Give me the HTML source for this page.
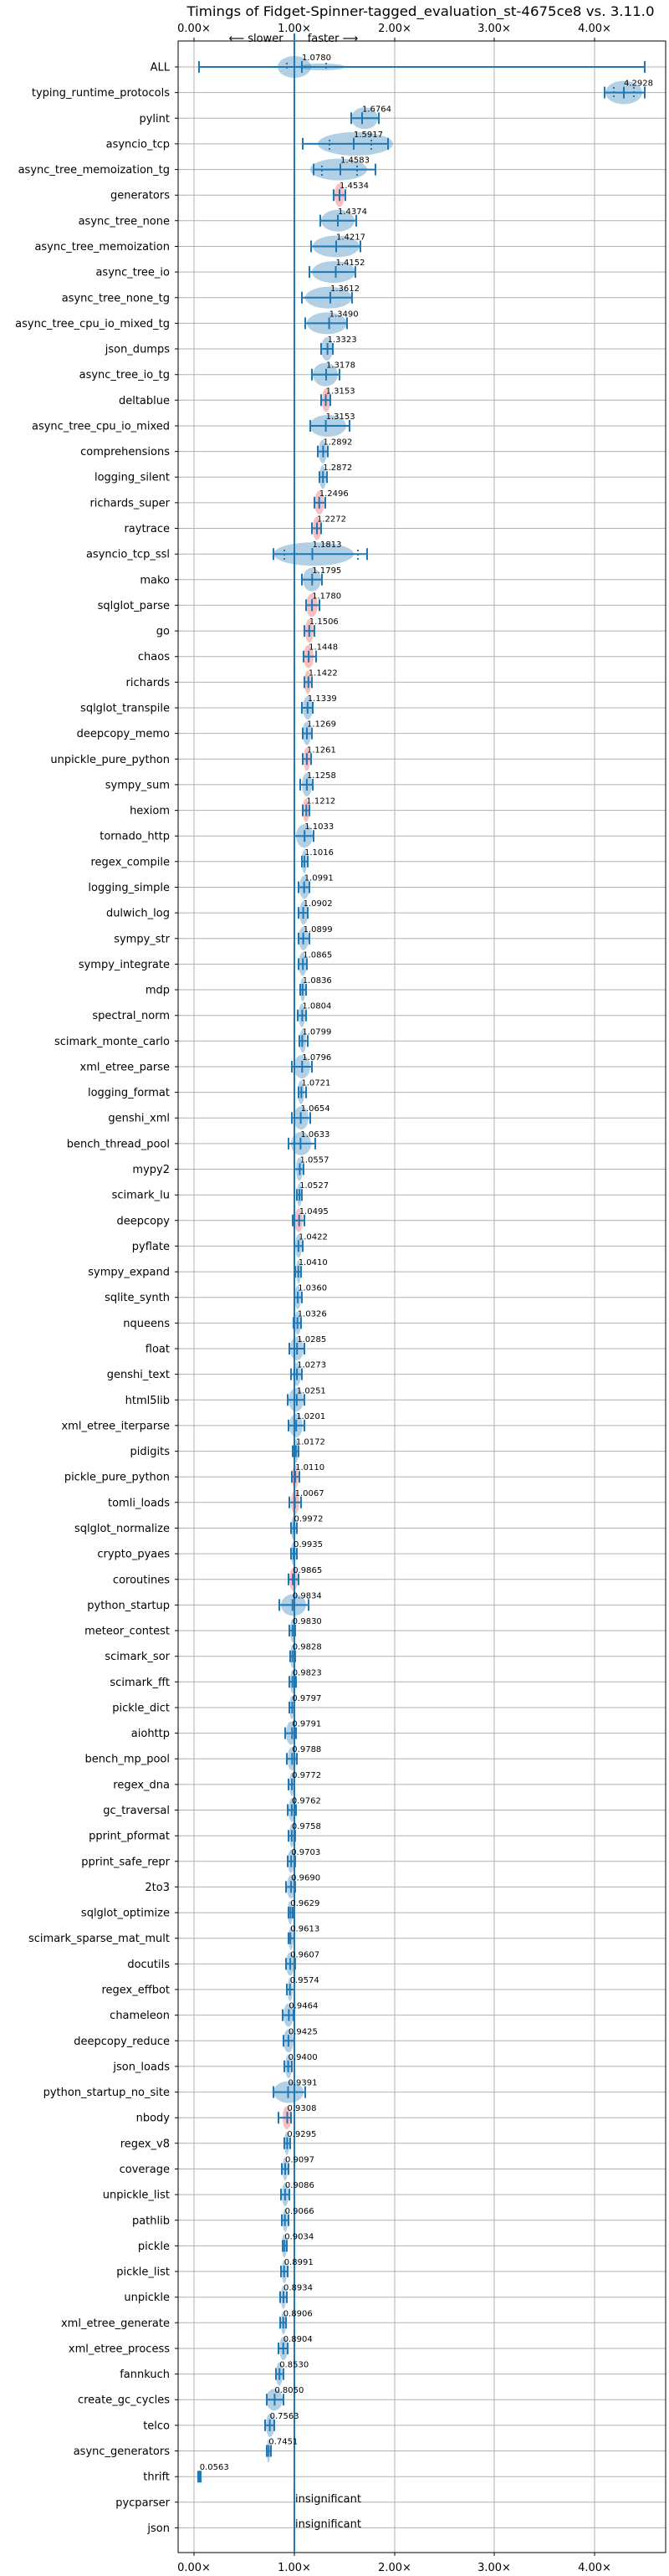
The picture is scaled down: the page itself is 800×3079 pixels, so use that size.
<!DOCTYPE html>
<html><head><meta charset="utf-8"><style>
html,body{margin:0;padding:0;background:#fff;}
svg{display:block;font-family:"DejaVu Sans","Liberation Sans",sans-serif;}
.v{fill:#1f77b4;fill-opacity:.35}
.r{fill:#f08080;fill-opacity:.5}
.lab text{font-size:13px;text-anchor:end;fill:#000}
.val text{font-size:10px;fill:#000}
</style></head><body>
<svg width="800" height="3079" viewBox="0 0 800 3079" xmlns="http://www.w3.org/2000/svg">
<rect width="800" height="3079" fill="#fff"/>
<text x="503" y="19" font-size="16" text-anchor="middle" textLength="559" lengthAdjust="spacingAndGlyphs">Timings of Fidget-Spinner-tagged_evaluation_st-4675ce8 vs. 3.11.0</text>
<g font-size="13" text-anchor="middle">
<text x="232" y="38">0.00×</text><text x="352" y="38">1.00×</text><text x="472" y="38">2.00×</text><text x="591" y="38">3.00×</text><text x="711" y="38">4.00×</text>
<text x="232" y="3073">0.00×</text><text x="352" y="3073">1.00×</text><text x="472" y="3073">2.00×</text><text x="591" y="3073">3.00×</text><text x="711" y="3073">4.00×</text>
<text x="306" y="50">⟵ slower</text><text x="398" y="50">faster ⟶</text>
</g>
<g stroke="#000" stroke-width="1">
<path d="M232 45V49M352 45V49M472 45V49M591 45V49M711 45V49M232 3051V3055M352 3051V3055M472 3051V3055M591 3051V3055M711 3051V3055"/>
</g>
<g stroke="#b0b0b0" stroke-width="1">
<path d="M232 49V3051M352 49V3051M472 49V3051M591 49V3051M711 49V3051"/>
<path id="hg" d="M213 80H796M213 110.6H796M213 141.3H796M213 171.9H796M213 202.6H796M213 233.2H796M213 263.8H796M213 294.5H796M213 325.1H796M213 355.8H796M213 386.4H796M213 417H796M213 447.7H796M213 478.3H796M213 509H796M213 539.6H796M213 570.2H796M213 600.9H796M213 631.5H796M213 662.2H796M213 692.8H796M213 723.4H796M213 754.1H796M213 784.7H796M213 815.4H796M213 846H796M213 876.6H796M213 907.3H796M213 937.9H796M213 968.6H796M213 999.2H796M213 1029.8H796M213 1060.5H796M213 1091.1H796M213 1121.8H796M213 1152.4H796M213 1183H796M213 1213.7H796M213 1244.3H796M213 1275H796M213 1305.6H796M213 1336.2H796M213 1366.9H796M213 1397.5H796M213 1428.2H796M213 1458.8H796M213 1489.4H796M213 1520.1H796M213 1550.7H796M213 1581.4H796M213 1612H796M213 1642.6H796M213 1673.3H796M213 1703.9H796M213 1734.6H796M213 1765.2H796M213 1795.8H796M213 1826.5H796M213 1857.1H796M213 1887.8H796M213 1918.4H796M213 1949H796M213 1979.7H796M213 2010.3H796M213 2041H796M213 2071.6H796M213 2102.2H796M213 2132.9H796M213 2163.5H796M213 2194.2H796M213 2224.8H796M213 2255.4H796M213 2286.1H796M213 2316.7H796M213 2347.4H796M213 2378H796M213 2408.6H796M213 2439.3H796M213 2469.9H796M213 2500.6H796M213 2531.2H796M213 2561.8H796M213 2592.5H796M213 2623.1H796M213 2653.8H796M213 2684.4H796M213 2715H796M213 2745.7H796M213 2776.3H796M213 2807H796M213 2837.6H796M213 2868.2H796M213 2898.9H796M213 2929.5H796M213 2960.2H796M213 2990.8H796M213 3021.4H796"/>
</g>
<g transform="translate(-4,0)" stroke="#000"><use href="#hg" style="stroke-dasharray:4 2000"/></g>
<rect x="213" y="49" width="583" height="3002" fill="none" stroke="#000" stroke-width="1"/>
<g>
<ellipse class="v" cx="352" cy="80" rx="20" ry="13"/><ellipse class="v" cx="385" cy="80" rx="28" ry="4"/>
<ellipse class="v" cx="746" cy="110.6" rx="22" ry="14"/>
<ellipse class="v" cx="436" cy="141.3" rx="16" ry="13"/>
<ellipse class="v" cx="425" cy="171.9" rx="45" ry="14"/>
<ellipse class="v" cx="405" cy="202.6" rx="34" ry="13"/>
<ellipse class="r" cx="406" cy="233.2" rx="6" ry="14"/>
<ellipse class="v" cx="404" cy="263.8" rx="20" ry="13"/>
<ellipse class="v" cx="402" cy="294.5" rx="28" ry="13"/>
<ellipse class="v" cx="399" cy="325.1" rx="26" ry="13"/>
<ellipse class="v" cx="393" cy="355.8" rx="28" ry="13"/>
<ellipse class="v" cx="391" cy="386.4" rx="24" ry="13"/>
<ellipse class="v" cx="391" cy="417" rx="7" ry="14"/>
<ellipse class="v" cx="389" cy="447.7" rx="15" ry="14"/>
<ellipse class="r" cx="390" cy="478.3" rx="5" ry="14"/>
<ellipse class="v" cx="392" cy="509" rx="22" ry="13"/>
<ellipse class="v" cx="386" cy="539.6" rx="5" ry="14"/>
<ellipse class="v" cx="386" cy="570.2" rx="4" ry="14"/>
<ellipse class="r" cx="382" cy="600.9" rx="6" ry="14"/>
<ellipse class="r" cx="379" cy="631.5" rx="5" ry="14"/>
<ellipse class="v" cx="375" cy="662.2" rx="48" ry="14"/>
<ellipse class="v" cx="373" cy="692.8" rx="11" ry="14"/>
<ellipse class="r" cx="373" cy="723.4" rx="7" ry="14"/>
<ellipse class="r" cx="370" cy="754.1" rx="5" ry="14"/>
<ellipse class="r" cx="369" cy="784.7" rx="6" ry="14"/>
<ellipse class="r" cx="368" cy="815.4" rx="4" ry="14"/>
<ellipse class="v" cx="368" cy="846" rx="6" ry="14"/>
<ellipse class="v" cx="367" cy="876.6" rx="5" ry="14"/>
<ellipse class="r" cx="367" cy="907.3" rx="4" ry="14"/>
<ellipse class="v" cx="367" cy="937.9" rx="6" ry="14"/>
<ellipse class="r" cx="366" cy="968.6" rx="4" ry="14"/>
<ellipse class="v" cx="364" cy="999.2" rx="10" ry="14"/>
<ellipse class="v" cx="364" cy="1029.8" rx="3" ry="14"/>
<ellipse class="v" cx="364" cy="1060.5" rx="6" ry="14"/>
<ellipse class="v" cx="363" cy="1091.1" rx="5" ry="14"/>
<ellipse class="v" cx="363" cy="1121.8" rx="6" ry="14"/>
<ellipse class="v" cx="362" cy="1152.4" rx="5" ry="14"/>
<ellipse class="v" cx="362" cy="1183" rx="3" ry="14"/>
<ellipse class="v" cx="361" cy="1213.7" rx="4" ry="14"/>
<ellipse class="v" cx="362" cy="1244.3" rx="4" ry="14"/>
<ellipse class="v" cx="361" cy="1275" rx="10" ry="14"/>
<ellipse class="v" cx="360" cy="1305.6" rx="4" ry="14"/>
<ellipse class="v" cx="360" cy="1336.2" rx="9" ry="14"/>
<ellipse class="v" cx="360" cy="1366.9" rx="12" ry="14"/>
<ellipse class="v" cx="358" cy="1397.5" rx="4" ry="14"/>
<ellipse class="v" cx="358" cy="1428.2" rx="3" ry="14"/>
<ellipse class="r" cx="357" cy="1458.8" rx="5" ry="14"/>
<ellipse class="v" cx="357" cy="1489.4" rx="4" ry="14"/>
<ellipse class="v" cx="357" cy="1520.1" rx="3" ry="14"/>
<ellipse class="v" cx="356" cy="1550.7" rx="4" ry="14"/>
<ellipse class="v" cx="356" cy="1581.4" rx="4" ry="14"/>
<ellipse class="v" cx="355" cy="1612" rx="8" ry="14"/>
<ellipse class="v" cx="355" cy="1642.6" rx="5" ry="14"/>
<ellipse class="v" cx="354" cy="1673.3" rx="9" ry="14"/>
<ellipse class="v" cx="354" cy="1703.9" rx="8" ry="14"/>
<ellipse class="v" cx="354" cy="1734.6" rx="3" ry="14"/>
<ellipse class="r" cx="353" cy="1765.2" rx="4" ry="14"/>
<ellipse class="r" cx="353" cy="1795.8" rx="5" ry="14"/>
<ellipse class="v" cx="351" cy="1826.5" rx="3" ry="14"/>
<ellipse class="v" cx="351" cy="1857.1" rx="3" ry="14"/>
<ellipse class="r" cx="351" cy="1887.8" rx="5" ry="14"/>
<ellipse class="v" cx="351" cy="1918.4" rx="15" ry="13"/>
<ellipse class="v" cx="350" cy="1949" rx="3" ry="14"/>
<ellipse class="v" cx="350" cy="1979.7" rx="3" ry="14"/>
<ellipse class="v" cx="350" cy="2010.3" rx="3" ry="14"/>
<ellipse class="v" cx="349" cy="2041" rx="3" ry="14"/>
<ellipse class="v" cx="348" cy="2071.6" rx="6" ry="14"/>
<ellipse class="v" cx="349" cy="2102.2" rx="5" ry="14"/>
<ellipse class="v" cx="349" cy="2132.9" rx="3" ry="14"/>
<ellipse class="v" cx="349" cy="2163.5" rx="4" ry="14"/>
<ellipse class="v" cx="349" cy="2194.2" rx="3" ry="14"/>
<ellipse class="v" cx="348" cy="2224.8" rx="4" ry="14"/>
<ellipse class="v" cx="348" cy="2255.4" rx="5" ry="14"/>
<ellipse class="v" cx="347" cy="2286.1" rx="3" ry="14"/>
<ellipse class="v" cx="348" cy="2316.7" rx="3" ry="14"/>
<ellipse class="v" cx="347" cy="2347.4" rx="5" ry="14"/>
<ellipse class="v" cx="347" cy="2378" rx="3" ry="14"/>
<ellipse class="v" cx="345" cy="2408.6" rx="6" ry="14"/>
<ellipse class="v" cx="345" cy="2439.3" rx="6" ry="14"/>
<ellipse class="v" cx="345" cy="2469.9" rx="4" ry="14"/>
<ellipse class="v" cx="345" cy="2500.6" rx="18" ry="13"/>
<ellipse class="r" cx="343" cy="2531.2" rx="5" ry="14"/>
<ellipse class="v" cx="343" cy="2561.8" rx="3" ry="14"/>
<ellipse class="v" cx="341" cy="2592.5" rx="3" ry="14"/>
<ellipse class="v" cx="341" cy="2623.1" rx="4" ry="14"/>
<ellipse class="v" cx="341" cy="2653.8" rx="3" ry="14"/>
<ellipse class="v" cx="340" cy="2684.4" rx="3" ry="14"/>
<ellipse class="v" cx="340" cy="2715" rx="3" ry="14"/>
<ellipse class="v" cx="339" cy="2745.7" rx="3" ry="14"/>
<ellipse class="v" cx="339" cy="2776.3" rx="3" ry="14"/>
<ellipse class="v" cx="339" cy="2807" rx="5" ry="14"/>
<ellipse class="v" cx="334" cy="2837.6" rx="4" ry="14"/>
<ellipse class="v" cx="328" cy="2868.2" rx="10" ry="13"/>
<ellipse class="v" cx="323" cy="2898.9" rx="5" ry="14"/>
<ellipse class="v" cx="321" cy="2929.5" rx="2" ry="14"/>
</g>
<path d="M352 40V3051" stroke="#1f77b4" stroke-width="2"/>
<g stroke="#1f77b4" stroke-width="2" fill="none">
<path d="M238 80H771M238 73v14M771 73v14M361 73v14"/>
<path d="M723 110.6H771M723 103.6v14M771 103.6v14M746 103.6v14"/>
<path d="M420 141.3H453M420 134.3v14M453 134.3v14M433 134.3v14"/>
<path d="M362 171.9H464M362 164.9v14M464 164.9v14M423 164.9v14"/>
<path d="M375 202.6H449M375 195.6v14M449 195.6v14M407 195.6v14"/>
<path d="M399 233.2H413M399 226.2v14M413 226.2v14M406 226.2v14"/>
<path d="M383 263.8H426M383 256.8v14M426 256.8v14M404 256.8v14"/>
<path d="M372 294.5H431M372 287.5v14M431 287.5v14M402 287.5v14"/>
<path d="M370 325.1H425M370 318.1v14M425 318.1v14M401.5 318.1v14"/>
<path d="M361 355.8H421M361 348.8v14M421 348.8v14M395 348.8v14"/>
<path d="M365 386.4H415M365 379.4v14M415 379.4v14M393.6 379.4v14"/>
<path d="M384 417H398M384 410v14M398 410v14M391.6 410v14"/>
<path d="M373 447.7H406M373 440.7v14M406 440.7v14M390 440.7v14"/>
<path d="M384 478.3H395M384 471.3v14M395 471.3v14M389.6 471.3v14"/>
<path d="M371 509H418M371 502v14M418 502v14M389.6 502v14"/>
<path d="M380 539.6H392M380 532.6v14M392 532.6v14M386.4 532.6v14"/>
<path d="M382 570.2H391M382 563.2v14M391 563.2v14M386.2 563.2v14"/>
<path d="M376 600.9H389M376 593.9v14M389 593.9v14M381.7 593.9v14"/>
<path d="M373 631.5H384M373 624.5v14M384 624.5v14M379 624.5v14"/>
<path d="M327 662.2H439M327 655.2v14M439 655.2v14M373.5 655.2v14"/>
<path d="M361 692.8H385M361 685.8v14M385 685.8v14M373.3 685.8v14"/>
<path d="M366 723.4H382M366 716.4v14M382 716.4v14M373.1 716.4v14"/>
<path d="M364 754.1H376M364 747.1v14M376 747.1v14M369.8 747.1v14"/>
<path d="M363 784.7H378M363 777.7v14M378 777.7v14M369.1 777.7v14"/>
<path d="M364 815.4H373M364 808.4v14M373 808.4v14M368.8 808.4v14"/>
<path d="M361 846H374M361 839v14M374 839v14M367.8 839v14"/>
<path d="M362 876.6H373M362 869.6v14M373 869.6v14M367 869.6v14"/>
<path d="M362 907.3H372M362 900.3v14M372 900.3v14M366.9 900.3v14"/>
<path d="M359 937.9H374M359 930.9v14M374 930.9v14M366.9 930.9v14"/>
<path d="M362 968.6H370M362 961.6v14M370 961.6v14M366.3 961.6v14"/>
<path d="M352 999.2H375M352 992.2v14M375 992.2v14M364.2 992.2v14"/>
<path d="M361 1029.8H368M361 1022.8v14M368 1022.8v14M364 1022.8v14"/>
<path d="M357 1060.5H370M357 1053.5v14M370 1053.5v14M363.7 1053.5v14"/>
<path d="M357 1091.1H368M357 1084.1v14M368 1084.1v14M362.6 1084.1v14"/>
<path d="M357 1121.8H370M357 1114.8v14M370 1114.8v14M362.6 1114.8v14"/>
<path d="M357 1152.4H367M357 1145.4v14M367 1145.4v14M362.2 1145.4v14"/>
<path d="M359 1183H366M359 1176v14M366 1176v14M361.8 1176v14"/>
<path d="M356 1213.7H366M356 1206.7v14M366 1206.7v14M361.4 1206.7v14"/>
<path d="M358 1244.3H368M358 1237.3v14M368 1237.3v14M361.4 1237.3v14"/>
<path d="M349 1275H373M349 1268v14M373 1268v14M361.3 1268v14"/>
<path d="M357 1305.6H366M357 1298.6v14M366 1298.6v14M360.4 1298.6v14"/>
<path d="M349 1336.2H371M349 1329.2v14M371 1329.2v14M359.6 1329.2v14"/>
<path d="M345 1366.9H377M345 1359.9v14M377 1359.9v14M359.4 1359.9v14"/>
<path d="M352 1397.5H363M352 1390.5v14M363 1390.5v14M358.5 1390.5v14"/>
<path d="M355 1428.2H361M355 1421.2v14M361 1421.2v14M358.1 1421.2v14"/>
<path d="M350 1458.8H364M350 1451.8v14M364 1451.8v14M357.7 1451.8v14"/>
<path d="M352 1489.4H362M352 1482.4v14M362 1482.4v14M356.9 1482.4v14"/>
<path d="M353 1520.1H360M353 1513.1v14M360 1513.1v14M356.7 1513.1v14"/>
<path d="M352 1550.7H361M352 1543.7v14M361 1543.7v14M356.1 1543.7v14"/>
<path d="M351 1581.4H360M351 1574.4v14M360 1574.4v14M355.7 1574.4v14"/>
<path d="M346 1612H364M346 1605v14M364 1605v14M355.2 1605v14"/>
<path d="M348 1642.6H361M348 1635.6v14M361 1635.6v14M355.1 1635.6v14"/>
<path d="M344 1673.3H364M344 1666.3v14M364 1666.3v14M354.8 1666.3v14"/>
<path d="M345 1703.9H364M345 1696.9v14M364 1696.9v14M354.2 1696.9v14"/>
<path d="M350 1734.6H357M350 1727.6v14M357 1727.6v14M353.9 1727.6v14"/>
<path d="M349 1765.2H358M349 1758.2v14M358 1758.2v14M353.1 1758.2v14"/>
<path d="M346 1795.8H360M346 1788.8v14M360 1788.8v14M352.6 1788.8v14"/>
<path d="M348 1826.5H355M348 1819.5v14M355 1819.5v14M351.5 1819.5v14"/>
<path d="M348 1857.1H355M348 1850.1v14M355 1850.1v14M351 1850.1v14"/>
<path d="M345 1887.8H357M345 1880.8v14M357 1880.8v14M350.2 1880.8v14"/>
<path d="M334 1918.4H369M334 1911.4v14M369 1911.4v14M349.8 1911.4v14"/>
<path d="M346 1949H353M346 1942v14M353 1942v14M349.8 1942v14"/>
<path d="M347 1979.7H353M347 1972.7v14M353 1972.7v14M349.7 1972.7v14"/>
<path d="M346 2010.3H354M346 2003.3v14M354 2003.3v14M349.7 2003.3v14"/>
<path d="M346 2041H352M346 2034v14M352 2034v14M349.4 2034v14"/>
<path d="M341 2071.6H354M341 2064.6v14M354 2064.6v14M349.3 2064.6v14"/>
<path d="M343 2102.2H355M343 2095.2v14M355 2095.2v14M349.3 2095.2v14"/>
<path d="M345 2132.9H352M345 2125.9v14M352 2125.9v14M349.1 2125.9v14"/>
<path d="M344 2163.5H354M344 2156.5v14M354 2156.5v14M348.9 2156.5v14"/>
<path d="M345 2194.2H353M345 2187.2v14M353 2187.2v14M348.9 2187.2v14"/>
<path d="M344 2224.8H353M344 2217.8v14M353 2217.8v14M348.2 2217.8v14"/>
<path d="M342 2255.4H353M342 2248.4v14M353 2248.4v14M348.1 2248.4v14"/>
<path d="M345 2286.1H350M345 2279.1v14M350 2279.1v14M347.4 2279.1v14"/>
<path d="M345 2316.7H352M345 2309.7v14M352 2309.7v14M347.2 2309.7v14"/>
<path d="M342 2347.4H353M342 2340.4v14M353 2340.4v14M347.1 2340.4v14"/>
<path d="M343 2378H352M343 2371v14M352 2371v14M346.7 2371v14"/>
<path d="M338 2408.6H351M338 2401.6v14M351 2401.6v14M345.4 2401.6v14"/>
<path d="M339 2439.3H352M339 2432.3v14M352 2432.3v14M344.9 2432.3v14"/>
<path d="M340 2469.9H349M340 2462.9v14M349 2462.9v14M344.6 2462.9v14"/>
<path d="M327 2500.6H365M327 2493.6v14M365 2493.6v14M344.5 2493.6v14"/>
<path d="M333 2531.2H348M333 2524.2v14M348 2524.2v14M343.5 2524.2v14"/>
<path d="M340 2561.8H347M340 2554.8v14M347 2554.8v14M343.4 2554.8v14"/>
<path d="M337 2592.5H345M337 2585.5v14M345 2585.5v14M341 2585.5v14"/>
<path d="M336 2623.1H346M336 2616.1v14M346 2616.1v14M340.9 2616.1v14"/>
<path d="M337 2653.8H345M337 2646.8v14M345 2646.8v14M340.6 2646.8v14"/>
<path d="M338 2684.4H343M338 2677.4v14M343 2677.4v14M340.2 2677.4v14"/>
<path d="M336 2715H344M336 2708v14M344 2708v14M339.7 2708v14"/>
<path d="M335 2745.7H343M335 2738.7v14M343 2738.7v14M339 2738.7v14"/>
<path d="M335 2776.3H342M335 2769.3v14M342 2769.3v14M338.7 2769.3v14"/>
<path d="M333 2807H344M333 2800v14M344 2800v14M338.7 2800v14"/>
<path d="M330 2837.6H339M330 2830.6v14M339 2830.6v14M334.2 2830.6v14"/>
<path d="M319 2868.2H339M319 2861.2v14M339 2861.2v14M328.4 2861.2v14"/>
<path d="M317 2898.9H328M317 2891.9v14M328 2891.9v14M322.6 2891.9v14"/>
<path d="M319 2929.5H324M319 2922.5v14M324 2922.5v14M321.3 2922.5v14"/>
<path d="M237 2960.2H240M237 2953.2v14M240 2953.2v14M238.7 2953.2v14"/>
</g>
<g stroke="#1f77b4" stroke-width="2" stroke-dasharray="2 3">
<path d="M343 75v10M390 75v10M734 104v14M758 104v14M340 657v14M428 657v14M394 167v14M444 167v14M385 198v14M427 198v14"/>
</g>
<g class="lab">
<text x="203" y="84.5">ALL</text>
<text x="203" y="115.1">typing_runtime_protocols</text>
<text x="203" y="145.8">pylint</text>
<text x="203" y="176.4">asyncio_tcp</text>
<text x="203" y="207.1">async_tree_memoization_tg</text>
<text x="203" y="237.7">generators</text>
<text x="203" y="268.3">async_tree_none</text>
<text x="203" y="299">async_tree_memoization</text>
<text x="203" y="329.6">async_tree_io</text>
<text x="203" y="360.3">async_tree_none_tg</text>
<text x="203" y="390.9">async_tree_cpu_io_mixed_tg</text>
<text x="203" y="421.5">json_dumps</text>
<text x="203" y="452.2">async_tree_io_tg</text>
<text x="203" y="482.8">deltablue</text>
<text x="203" y="513.5">async_tree_cpu_io_mixed</text>
<text x="203" y="544.1">comprehensions</text>
<text x="203" y="574.7">logging_silent</text>
<text x="203" y="605.4">richards_super</text>
<text x="203" y="636">raytrace</text>
<text x="203" y="666.7">asyncio_tcp_ssl</text>
<text x="203" y="697.3">mako</text>
<text x="203" y="727.9">sqlglot_parse</text>
<text x="203" y="758.6">go</text>
<text x="203" y="789.2">chaos</text>
<text x="203" y="819.9">richards</text>
<text x="203" y="850.5">sqlglot_transpile</text>
<text x="203" y="881.1">deepcopy_memo</text>
<text x="203" y="911.8">unpickle_pure_python</text>
<text x="203" y="942.4">sympy_sum</text>
<text x="203" y="973.1">hexiom</text>
<text x="203" y="1003.7">tornado_http</text>
<text x="203" y="1034.3">regex_compile</text>
<text x="203" y="1065">logging_simple</text>
<text x="203" y="1095.6">dulwich_log</text>
<text x="203" y="1126.3">sympy_str</text>
<text x="203" y="1156.9">sympy_integrate</text>
<text x="203" y="1187.5">mdp</text>
<text x="203" y="1218.2">spectral_norm</text>
<text x="203" y="1248.8">scimark_monte_carlo</text>
<text x="203" y="1279.5">xml_etree_parse</text>
<text x="203" y="1310.1">logging_format</text>
<text x="203" y="1340.7">genshi_xml</text>
<text x="203" y="1371.4">bench_thread_pool</text>
<text x="203" y="1402">mypy2</text>
<text x="203" y="1432.7">scimark_lu</text>
<text x="203" y="1463.3">deepcopy</text>
<text x="203" y="1493.9">pyflate</text>
<text x="203" y="1524.6">sympy_expand</text>
<text x="203" y="1555.2">sqlite_synth</text>
<text x="203" y="1585.9">nqueens</text>
<text x="203" y="1616.5">float</text>
<text x="203" y="1647.1">genshi_text</text>
<text x="203" y="1677.8">html5lib</text>
<text x="203" y="1708.4">xml_etree_iterparse</text>
<text x="203" y="1739.1">pidigits</text>
<text x="203" y="1769.7">pickle_pure_python</text>
<text x="203" y="1800.3">tomli_loads</text>
<text x="203" y="1831">sqlglot_normalize</text>
<text x="203" y="1861.6">crypto_pyaes</text>
<text x="203" y="1892.3">coroutines</text>
<text x="203" y="1922.9">python_startup</text>
<text x="203" y="1953.5">meteor_contest</text>
<text x="203" y="1984.2">scimark_sor</text>
<text x="203" y="2014.8">scimark_fft</text>
<text x="203" y="2045.5">pickle_dict</text>
<text x="203" y="2076.1">aiohttp</text>
<text x="203" y="2106.7">bench_mp_pool</text>
<text x="203" y="2137.4">regex_dna</text>
<text x="203" y="2168">gc_traversal</text>
<text x="203" y="2198.7">pprint_pformat</text>
<text x="203" y="2229.3">pprint_safe_repr</text>
<text x="203" y="2259.9">2to3</text>
<text x="203" y="2290.6">sqlglot_optimize</text>
<text x="203" y="2321.2">scimark_sparse_mat_mult</text>
<text x="203" y="2351.9">docutils</text>
<text x="203" y="2382.5">regex_effbot</text>
<text x="203" y="2413.1">chameleon</text>
<text x="203" y="2443.8">deepcopy_reduce</text>
<text x="203" y="2474.4">json_loads</text>
<text x="203" y="2505.1">python_startup_no_site</text>
<text x="203" y="2535.7">nbody</text>
<text x="203" y="2566.3">regex_v8</text>
<text x="203" y="2597">coverage</text>
<text x="203" y="2627.6">unpickle_list</text>
<text x="203" y="2658.3">pathlib</text>
<text x="203" y="2688.9">pickle</text>
<text x="203" y="2719.5">pickle_list</text>
<text x="203" y="2750.2">unpickle</text>
<text x="203" y="2780.8">xml_etree_generate</text>
<text x="203" y="2811.5">xml_etree_process</text>
<text x="203" y="2842.1">fannkuch</text>
<text x="203" y="2872.7">create_gc_cycles</text>
<text x="203" y="2903.4">telco</text>
<text x="203" y="2934">async_generators</text>
<text x="203" y="2964.7">thrift</text>
<text x="203" y="2995.3">pycparser</text>
<text x="203" y="3025.9">json</text>
</g>
<g class="val">
<text x="361" y="72">1.0780</text>
<text x="746" y="102.6">4.2928</text>
<text x="433" y="133.3">1.6764</text>
<text x="423" y="163.9">1.5917</text>
<text x="407" y="194.6">1.4583</text>
<text x="406" y="225.2">1.4534</text>
<text x="404" y="255.8">1.4374</text>
<text x="402" y="286.5">1.4217</text>
<text x="401.5" y="317.1">1.4152</text>
<text x="395" y="347.8">1.3612</text>
<text x="393.6" y="378.4">1.3490</text>
<text x="391.6" y="409">1.3323</text>
<text x="390" y="439.7">1.3178</text>
<text x="389.6" y="470.3">1.3153</text>
<text x="389.6" y="501">1.3153</text>
<text x="386.4" y="531.6">1.2892</text>
<text x="386.2" y="562.2">1.2872</text>
<text x="381.7" y="592.9">1.2496</text>
<text x="379" y="623.5">1.2272</text>
<text x="373.5" y="654.2">1.1813</text>
<text x="373.3" y="684.8">1.1795</text>
<text x="373.1" y="715.4">1.1780</text>
<text x="369.8" y="746.1">1.1506</text>
<text x="369.1" y="776.7">1.1448</text>
<text x="368.8" y="807.4">1.1422</text>
<text x="367.8" y="838">1.1339</text>
<text x="367" y="868.6">1.1269</text>
<text x="366.9" y="899.3">1.1261</text>
<text x="366.9" y="929.9">1.1258</text>
<text x="366.3" y="960.6">1.1212</text>
<text x="364.2" y="991.2">1.1033</text>
<text x="364" y="1021.8">1.1016</text>
<text x="363.7" y="1052.5">1.0991</text>
<text x="362.6" y="1083.1">1.0902</text>
<text x="362.6" y="1113.8">1.0899</text>
<text x="362.2" y="1144.4">1.0865</text>
<text x="361.8" y="1175">1.0836</text>
<text x="361.4" y="1205.7">1.0804</text>
<text x="361.4" y="1236.3">1.0799</text>
<text x="361.3" y="1267">1.0796</text>
<text x="360.4" y="1297.6">1.0721</text>
<text x="359.6" y="1328.2">1.0654</text>
<text x="359.4" y="1358.9">1.0633</text>
<text x="358.5" y="1389.5">1.0557</text>
<text x="358.1" y="1420.2">1.0527</text>
<text x="357.7" y="1450.8">1.0495</text>
<text x="356.9" y="1481.4">1.0422</text>
<text x="356.7" y="1512.1">1.0410</text>
<text x="356.1" y="1542.7">1.0360</text>
<text x="355.7" y="1573.4">1.0326</text>
<text x="355.2" y="1604">1.0285</text>
<text x="355.1" y="1634.6">1.0273</text>
<text x="354.8" y="1665.3">1.0251</text>
<text x="354.2" y="1695.9">1.0201</text>
<text x="353.9" y="1726.6">1.0172</text>
<text x="353.1" y="1757.2">1.0110</text>
<text x="352.6" y="1787.8">1.0067</text>
<text x="351.5" y="1818.5">0.9972</text>
<text x="351" y="1849.1">0.9935</text>
<text x="350.2" y="1879.8">0.9865</text>
<text x="349.8" y="1910.4">0.9834</text>
<text x="349.8" y="1941">0.9830</text>
<text x="349.7" y="1971.7">0.9828</text>
<text x="349.7" y="2002.3">0.9823</text>
<text x="349.4" y="2033">0.9797</text>
<text x="349.3" y="2063.6">0.9791</text>
<text x="349.3" y="2094.2">0.9788</text>
<text x="349.1" y="2124.9">0.9772</text>
<text x="348.9" y="2155.5">0.9762</text>
<text x="348.9" y="2186.2">0.9758</text>
<text x="348.2" y="2216.8">0.9703</text>
<text x="348.1" y="2247.4">0.9690</text>
<text x="347.4" y="2278.1">0.9629</text>
<text x="347.2" y="2308.7">0.9613</text>
<text x="347.1" y="2339.4">0.9607</text>
<text x="346.7" y="2370">0.9574</text>
<text x="345.4" y="2400.6">0.9464</text>
<text x="344.9" y="2431.3">0.9425</text>
<text x="344.6" y="2461.9">0.9400</text>
<text x="344.5" y="2492.6">0.9391</text>
<text x="343.5" y="2523.2">0.9308</text>
<text x="343.4" y="2553.8">0.9295</text>
<text x="341" y="2584.5">0.9097</text>
<text x="340.9" y="2615.1">0.9086</text>
<text x="340.6" y="2645.8">0.9066</text>
<text x="340.2" y="2676.4">0.9034</text>
<text x="339.7" y="2707">0.8991</text>
<text x="339" y="2737.7">0.8934</text>
<text x="338.7" y="2768.3">0.8906</text>
<text x="338.7" y="2799">0.8904</text>
<text x="334.2" y="2829.6">0.8530</text>
<text x="328.4" y="2860.2">0.8050</text>
<text x="322.6" y="2890.9">0.7563</text>
<text x="321.3" y="2921.5">0.7451</text>
<text x="238.7" y="2952.2">0.0563</text>
</g>
<g font-size="13"><text x="353" y="2991">insignificant</text><text x="353" y="3021">insignificant</text></g>
</svg>
</body></html>
